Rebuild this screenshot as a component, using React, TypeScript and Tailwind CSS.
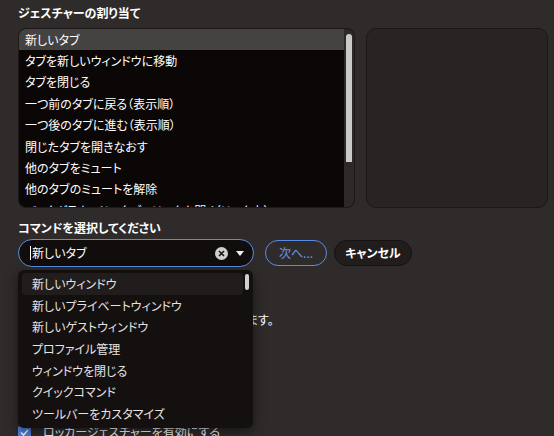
import React from 'react';

const gestures = [
  '新しいタブ',
  'タブを新しいウィンドウに移動',
  'タブを閉じる',
  '一つ前のタブに戻る（表示順）',
  '一つ後のタブに進む（表示順）',
  '閉じたタブを開きなおす',
  '他のタブをミュート',
  '他のタブのミュートを解除',
  'バックグラウンドのタブでリンクを開く（リンク上）',
];

const commands = [
  '新しいウィンドウ',
  '新しいプライベートウィンドウ',
  '新しいゲストウィンドウ',
  'プロファイル管理',
  'ウィンドウを閉じる',
  'クイックコマンド',
  'ツールバーをカスタマイズ',
];

export default function App() {
  return (
    <div className="relative w-[554px] h-[436px] overflow-hidden bg-[#2f2b2b] pl-[18px] pr-[6px] pt-[5px] text-white font-['Noto_Sans_CJK_JP','Noto_Sans',sans-serif] text-[12px] [font-feature-settings:'palt']">
      <h2 className="font-bold leading-[16px]">ジェスチャーの割り当て</h2>

      <div className="mt-[7px] flex gap-[11px]">
        {/* gesture list */}
        <div className="flex h-[180px] w-[337px] shrink-0 overflow-hidden rounded-[8px] border border-[#1d1919] bg-[#0c0707]">
          <div className="flex-1">
            {gestures.map((g, i) => (
              <div
                key={g}
                className={`flex h-[21.4px] items-center whitespace-nowrap px-[6px] ${i === 0 ? 'bg-[#454242]' : ''}`}
              >
                {g}
              </div>
            ))}
          </div>
          <div className="w-[10px] bg-[#2d2929] pt-[5px] pl-[2px]">
            <div className="h-[128px] w-[6px] rounded-t-[3px] bg-[#c9c9c9]" />
          </div>
        </div>
        {/* preview */}
        <div className="h-[180px] w-[182px] shrink-0 rounded-[10px] border border-[#1c1818] bg-[#282424]" />
      </div>

      <h2 className="mt-[12px] font-bold leading-[16px]">コマンドを選択してください</h2>

      <div className="mt-[3px] flex items-center gap-[8px]">
        <div className="flex h-[28px] w-[236px] items-center rounded-full border-[1.5px] border-[#5a8be6] bg-[#120d0d] pl-[11px] pr-[9px]">
          <span className="h-[14px] w-px bg-white" />
          <span className="flex-1 pl-px">新しいタブ</span>
          <span className="flex h-[13px] w-[13px] items-center justify-center rounded-full bg-[#cfcfcf]">
            <svg width="7" height="7" viewBox="0 0 7 7">
              <path d="M1 1L6 6M6 1L1 6" stroke="#1a1515" strokeWidth="1.6" />
            </svg>
          </span>
          <svg className="ml-[8px]" width="8" height="5" viewBox="0 0 8 5">
            <path d="M0 0H8L4 5Z" fill="#f2f2f2" />
          </svg>
        </div>
        <button className="ml-[3px] h-[26px] w-[62px] rounded-full border-[1.5px] border-[#5a8be6] text-[#6a95ea]">
          次へ...
        </button>
        <button className="ml-[-1px] h-[26px] w-[78px] rounded-full border border-[#161212] bg-[#211d1d] font-bold">
          キャンセル
        </button>
      </div>

      <p className="mt-[45px] whitespace-nowrap leading-[16px]">
        マウス右ボタンを押したままドラッグで実行します。
      </p>

      <label className="mt-[96px] flex items-center gap-[12px] leading-[16px]">
        <span className="flex h-[13px] w-[13px] items-center justify-center rounded-[2px] bg-[#4d82e4]">
          <svg width="9" height="7" viewBox="0 0 9 7">
            <path d="M1 3.5L3.5 6L8 1" stroke="#fff" strokeWidth="1.6" fill="none" />
          </svg>
        </span>
        ロッカージェスチャーを有効にする
      </label>

      {/* command dropdown */}
      <div className="absolute left-[18px] top-[270px] w-[235px] rounded-[6px] bg-[#151010] py-[3px] pl-[4px] pr-[4px] shadow-[0_4px_12px_rgba(0,0,0,0.5)]">
        <div className="flex">
          <div className="flex-1">
            {commands.map((c, i) => (
              <div
                key={c}
                className={`flex h-[21.7px] items-center rounded-[4px] pl-[10px] text-[#e6e3e3] ${i === 0 ? 'bg-[#221d1d]' : ''}`}
              >
                {c}
              </div>
            ))}
          </div>
          <div className="ml-[2px] w-[4px] pt-[1px]">
            <div className="h-[16px] w-[4px] rounded-full bg-[#d0d0d0]" />
          </div>
        </div>
      </div>
    </div>
  );
}
